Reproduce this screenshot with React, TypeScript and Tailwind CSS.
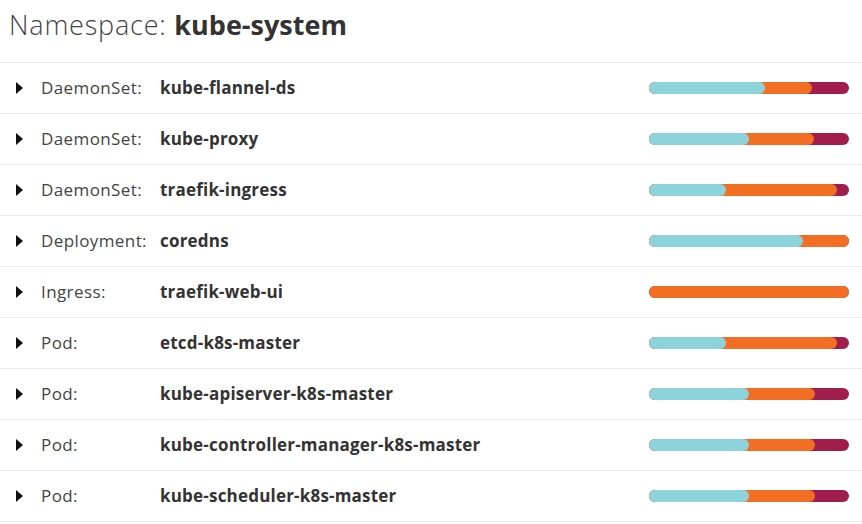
const rows = [
  { kind: 'DaemonSet:', name: 'kube-flannel-ds', c: 116, o: 163 },
  { kind: 'DaemonSet:', name: 'kube-proxy', c: 100, o: 165 },
  { kind: 'DaemonSet:', name: 'traefik-ingress', c: 77, o: 188 },
  { kind: 'Deployment:', name: 'coredns', c: 154, o: 200 },
  { kind: 'Ingress:', name: 'traefik-web-ui', c: 0, o: 200 },
  { kind: 'Pod:', name: 'etcd-k8s-master', c: 77, o: 188 },
  { kind: 'Pod:', name: 'kube-apiserver-k8s-master', c: 100, o: 166 },
  { kind: 'Pod:', name: 'kube-controller-manager-k8s-master', c: 100, o: 166 },
  { kind: 'Pod:', name: 'kube-scheduler-k8s-master', c: 100, o: 166 },
]

function Bar({ c, o }: { c: number; o: number }) {
  return (
    <div className="relative w-[200px] h-3 rounded-full bg-[#a11d4b]">
      <div className="absolute left-0 top-0 h-3 rounded-full bg-[#f26e22]" style={{ width: o }} />
      {c > 0 && <div className="absolute left-0 top-0 h-3 rounded-full bg-[#8cd3dc]" style={{ width: c }} />}
    </div>
  )
}

export default function App() {
  return (
    <div className="w-[862px] h-[524px] overflow-hidden bg-white text-[#333] font-['Open_Sans',sans-serif]">
      <h1 className="h-[63px] pl-[9px] pt-[7px] text-[27px] leading-[36px] border-b border-[#ebebeb]">
        <span className="font-light text-[#444] tracking-[0.8px]">Namespace: </span>
        <span className="font-bold">kube-system</span>
      </h1>
      {rows.map((r) => (
        <div key={r.name} className="h-[51px] flex items-center border-b border-[#ebebeb]">
          <svg width="8" height="12" viewBox="0 0 8 12" className="ml-[16px] mr-[17px]">
            <path d="M0 0 L7 6 L0 12 Z" fill="#111" />
          </svg>
          <span className="w-[119px] text-[17px] text-[#444] tracking-[0.4px]">{r.kind}</span>
          <span className="flex-1 text-[17px] font-bold text-[#333] tracking-[0.2px]">{r.name}</span>
          <div className="mr-[13px]">
            <Bar c={r.c} o={r.o} />
          </div>
        </div>
      ))}
    </div>
  )
}
